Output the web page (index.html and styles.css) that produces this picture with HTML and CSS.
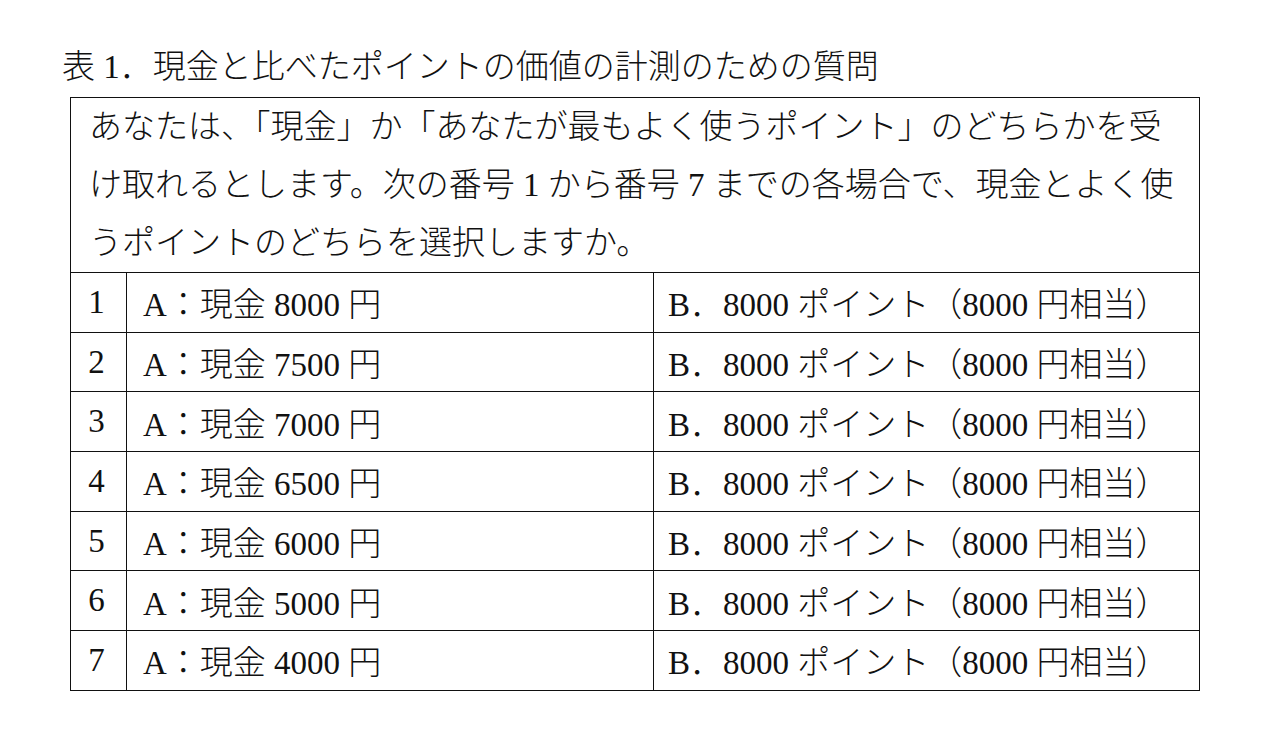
FILE: index.html
```html
<!DOCTYPE html>
<html lang="ja">
<head>
<meta charset="utf-8">
<link rel="stylesheet" href="styles.css">
</head>
<body>
<div class="page">
  <div class="title">表 1．現金と比べたポイントの価値の計測のための質問</div>
  <table class="qtable">
    <colgroup>
      <col class="c-num">
      <col class="c-a">
      <col class="c-b">
    </colgroup>
    <tr>
      <td class="intro" colspan="3">
        <span class="line">あなたは、「現金」か「あなたが最もよく使うポイント」のどちらかを受</span>
        <span class="line">け取れるとします。次の番号 1 から番号 7 までの各場合で、現金とよく使</span>
        <span class="line">うポイントのどちらを選択しますか。</span>
      </td>
    </tr>
    <tr><td class="num">1</td><td class="opt-a">A：現金 8000 円</td><td class="opt-b">B．8000 ポイント（8000 円相当）</td></tr>
    <tr><td class="num">2</td><td class="opt-a">A：現金 7500 円</td><td class="opt-b">B．8000 ポイント（8000 円相当）</td></tr>
    <tr><td class="num">3</td><td class="opt-a">A：現金 7000 円</td><td class="opt-b">B．8000 ポイント（8000 円相当）</td></tr>
    <tr><td class="num">4</td><td class="opt-a">A：現金 6500 円</td><td class="opt-b">B．8000 ポイント（8000 円相当）</td></tr>
    <tr><td class="num">5</td><td class="opt-a">A：現金 6000 円</td><td class="opt-b">B．8000 ポイント（8000 円相当）</td></tr>
    <tr><td class="num">6</td><td class="opt-a">A：現金 5000 円</td><td class="opt-b">B．8000 ポイント（8000 円相当）</td></tr>
    <tr><td class="num">7</td><td class="opt-a">A：現金 4000 円</td><td class="opt-b">B．8000 ポイント（8000 円相当）</td></tr>
  </table>
</div>
</body>
</html>
```

FILE: styles.css
```css
html, body {
  margin: 0;
  padding: 0;
  background: #ffffff;
}

body {
  font-family: "Liberation Serif", "Noto Sans CJK JP", serif;
  color: #111111;
}

.page {
  padding: 47px 0 0 62px;
}

.title {
  font-size: 33px;
  line-height: 40px;
  font-weight: 300;
  white-space: nowrap;
  margin-bottom: 10px;
}

.qtable {
  margin-left: 8px;
  border-collapse: collapse;
  width: 1129px;
  table-layout: fixed;
  font-size: 33px;
  font-weight: 300;
}

.c-num { width: 56px; }
.c-a { width: 527px; }
.c-b { width: 546px; }

.qtable td {
  border: 1px solid #111111;
  padding: 0;
  white-space: nowrap;
}

.intro {
  height: 174px;
  padding: 0 0 0 18px !important;
  vertical-align: top;
}

.line {
  display: block;
  line-height: 58px;
}

.num, .opt-a, .opt-b {
  height: 58.7px;
  vertical-align: middle;
}

.num {
  text-align: center;
  font-weight: 400;
  padding-right: 4px !important;
}

.opt-a {
  padding-left: 16px !important;
}

.opt-b {
  padding-left: 14px !important;
}
```
